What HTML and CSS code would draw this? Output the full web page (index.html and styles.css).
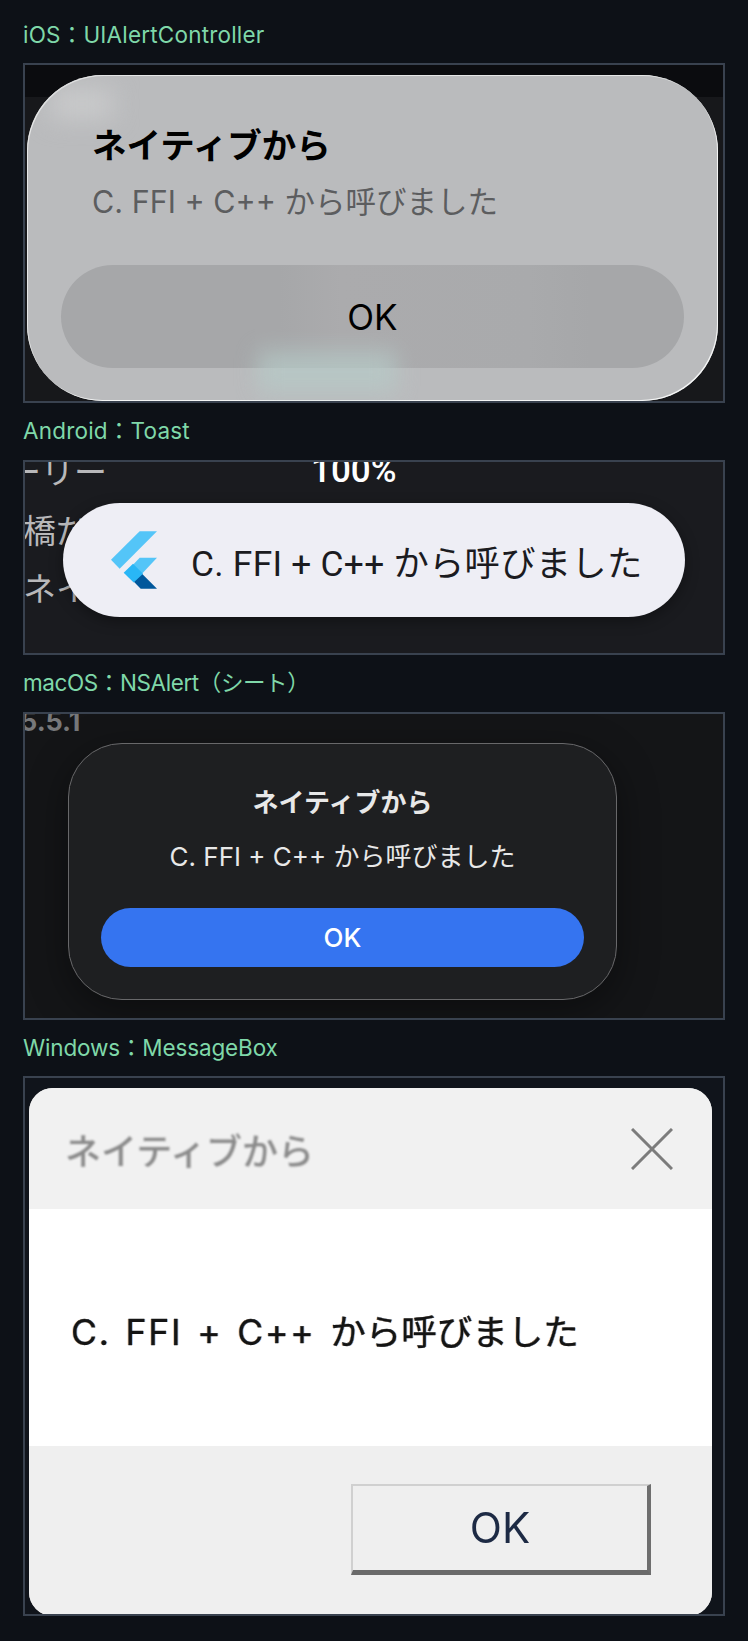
FILE: index.html
```html
<!DOCTYPE html>
<html lang="ja">
<head>
  <meta charset="UTF-8">
  <meta name="viewport" content="width=device-width, initial-scale=1.0">
  <title>Native dialogs</title>
  <link rel="stylesheet" href="styles.css">
</head>
<body>
  <section class="block">
    <p class="label label-ios">iOS：UIAlertController</p>
    <div class="frame frame-ios">
      <div class="ios-alert">
        <span class="ios-shine"></span>
        <h2 class="ios-title">ネイティブから</h2>
        <p class="ios-text">C. FFI + C++ から呼びました</p>
        <div class="ios-button">OK</div>
        <span class="ios-glow"></span>
      </div>
    </div>
  </section>

  <section class="block">
    <p class="label label-android">Android：Toast</p>
    <div class="frame frame-android">
      <span class="peek peek-row1">ーリー</span>
      <span class="peek peek-value">100%</span>
      <span class="peek peek-row2">橋だ</span>
      <span class="peek peek-row3">ネイ</span>
      <div class="toast">
        <svg class="flutter-logo" viewBox="64 62 138 173" aria-hidden="true">
          <polygon fill="#54c5f8" points="150,62 202,62 90,175 64,148"/>
          <polygon fill="#54c5f8" points="150,142 202,142 157,190 130,163"/>
          <polygon fill="#01579b" points="132,213 157,190 202,235 153,235"/>
          <polygon fill="#29b6f6" points="102,187 130,160 160,190 132,216"/>
        </svg>
        <span class="toast-text">C. FFI + C++ から呼びました</span>
      </div>
    </div>
  </section>

  <section class="block">
    <p class="label label-mac">macOS：NSAlert（シート）</p>
    <div class="frame frame-mac">
      <span class="peek peek-version">5.5.1</span>
      <div class="mac-sheet">
        <h2 class="mac-title">ネイティブから</h2>
        <p class="mac-text">C. FFI + C++ から呼びました</p>
        <div class="mac-button">OK</div>
      </div>
    </div>
  </section>

  <section class="block">
    <p class="label label-win">Windows：MessageBox</p>
    <div class="frame frame-win">
      <div class="win-box">
        <div class="win-head">
          <span class="win-title">ネイティブから</span>
          <svg class="win-close" viewBox="0 0 42 42" aria-hidden="true">
            <path d="M1 1 L41 41 M41 1 L1 41" stroke="#7c7c7c" stroke-width="3" fill="none"/>
          </svg>
        </div>
        <div class="win-body">
          <p class="win-text"><span class="win-latin">C. FFI + C++ </span>から呼びました</p>
        </div>
        <div class="win-foot">
          <div class="win-button">OK</div>
        </div>
      </div>
    </div>
  </section>
</body>
</html>
```

FILE: styles.css
```css
html, body {
  margin: 0;
  padding: 0;
}

body {
  height: 1641px;
  overflow: hidden;
  padding: 0 23px;
  background-color: #0d1117;
  font-family: Inter, "Noto Sans CJK JP", sans-serif;
}

h2, p {
  margin: 0;
  font-weight: inherit;
}

.label {
  box-sizing: border-box;
  color: #7fd8a9;
  font-size: 22.5px;
  line-height: 30px;
  white-space: nowrap;
}

.label-ios { padding-top: 20px; height: 63px; letter-spacing: 0.2px; }
.label-android { padding-top: 13px; height: 57px; letter-spacing: 0.2px; }
.label-mac { padding-top: 13px; height: 57px; letter-spacing: -0.4px; }
.label-win { padding-top: 13px; height: 56px; letter-spacing: -0.15px; }

.frame {
  position: relative;
  width: 702px;
  box-sizing: border-box;
  border: 2px solid #39424f;
  overflow: hidden;
}

/* iOS */
.frame-ios {
  height: 340px;
  padding: 10px 5px 0 2px;
  background: linear-gradient(#0b0c0f 0, #0b0c0f 32px, #17181b 32px);
}

.ios-alert {
  position: relative;
  height: 326px;
  box-sizing: border-box;
  padding: 47px 34px 0 34px;
  border-radius: 76px;
  background-color: #babbbd;
  box-shadow: inset -1px -1px 0 #f4f5f5, inset 1px 1px 0 #e6e7e7;
  overflow: hidden;
}

.ios-glow {
  position: absolute;
  left: 231px;
  top: 276px;
  width: 138px;
  height: 42px;
  background-color: #b6cbc8;
  opacity: 0.7;
  filter: blur(11px);
}

.ios-shine {
  position: absolute;
  left: 24px;
  top: 14px;
  width: 62px;
  height: 30px;
  background-color: #c9cacb;
  filter: blur(12px);
}

.ios-title {
  position: relative;
  padding-left: 31px;
  color: #000;
  font-size: 34.5px;
  font-weight: 700;
  line-height: 48px;
}

.ios-text {
  position: relative;
  margin-top: 10px;
  padding-left: 31px;
  color: #5c5d5f;
  font-size: 30.5px;
  line-height: 44px;
}

.ios-button {
  position: relative;
  height: 103px;
  margin-top: 41px;
  border-radius: 52px;
  background: linear-gradient(90deg, #a6a7a9 35%, #ababad 45%, #a9aaac 75%, #a6a7a9 85%);
  color: #000;
  font-size: 35px;
  line-height: 105px;
  text-align: center;
}

/* Android */
.frame-android {
  height: 195px;
  padding: 41px 38px 0 38px;
  background-color: #1a1b1f;
  font-family: Roboto, "Noto Sans CJK JP", sans-serif;
}

.peek {
  position: absolute;
  color: #b8b8ba;
  font-size: 33px;
  line-height: 44px;
  white-space: nowrap;
}

.peek-row1 { left: -17px; top: -11px; }
.peek-value { left: 286px; top: -13px; color: #fff; font-weight: 500; font-size: 35px; }
.peek-row2 { left: -2px; top: 48px; }
.peek-row3 { left: -2px; top: 106px; }

.toast {
  position: relative;
  display: flex;
  align-items: center;
  height: 114px;
  padding-left: 48px;
  border-radius: 57px;
  background-color: #eeeef5;
  box-shadow: 0 4px 14px rgba(0, 0, 0, 0.35);
}

.flutter-logo {
  width: 46px;
  height: 58px;
  margin-right: 34px;
}

.toast-text {
  color: #1b1b1f;
  font-size: 35.3px;
  letter-spacing: 0.27px;
  white-space: nowrap;
}

/* macOS */
.frame-mac {
  height: 308px;
  padding: 29px 0 0 43px;
  background-color: #141517;
}

.peek-version {
  left: -5px;
  top: -14px;
  color: #77787a;
  font-family: Inter, sans-serif;
  font-weight: 700;
  font-size: 27px;
}

.mac-sheet {
  position: relative;
  width: 549px;
  height: 257px;
  box-sizing: border-box;
  padding: 41px 32px 0 32px;
  border: 1px solid #68686a;
  border-radius: 54px;
  background-color: #1e1f21;
  box-shadow: 0 10px 40px rgba(0, 0, 0, 0.4);
  text-align: center;
}

.mac-title {
  color: #e8e8e8;
  font-size: 26px;
  font-weight: 700;
  line-height: 36px;
}

.mac-text {
  margin-top: 18px;
  color: #e8e8e8;
  font-size: 26px;
  line-height: 36px;
}

.mac-button {
  height: 59px;
  margin-top: 33px;
  border-radius: 30px;
  background-color: #3574f0;
  color: #fff;
  font-size: 26px;
  font-weight: 500;
  line-height: 59px;
}

/* Windows */
.frame-win {
  height: 540px;
  padding: 10px 11px 0 4px;
  background-color: #10141b;
}

.win-box {
  height: 528px;
  display: flex;
  flex-direction: column;
  border-radius: 24px;
  background-color: #f0f0f0;
  overflow: hidden;
}

.win-head {
  display: flex;
  align-items: center;
  justify-content: space-between;
  height: 121px;
  flex: none;
  padding: 0 39px 0 36px;
  background-color: #f1f1f1;
}

.win-title {
  color: #8a8a8a;
  font-size: 36px;
  font-weight: 500;
  filter: blur(0.8px);
}

.win-close {
  width: 42px;
  height: 42px;
  filter: blur(0.4px);
}

.win-body {
  display: flex;
  align-items: center;
  height: 237px;
  flex: none;
  box-sizing: border-box;
  padding: 4px 0 0 42px;
  background-color: #fff;
}

.win-text {
  color: #141414;
  font-size: 35.5px;
  -webkit-text-stroke: 0.3px #141414;
  text-shadow: -1px 0 rgba(230, 130, 20, 0.35), 1px 0 rgba(20, 110, 220, 0.35);
  filter: blur(0.5px);
  white-space: nowrap;
}

.win-latin {
  letter-spacing: 1.8px;
  word-spacing: 3px;
}

.win-foot {
  flex: 1;
  display: flex;
  justify-content: flex-end;
  padding: 38px 61px 0 0;
  background-color: #efefef;
}

.win-button {
  width: 300px;
  height: 91px;
  box-sizing: border-box;
  border: 2px solid #d0d0d0;
  border-right: 4px solid #6e6e6e;
  border-bottom: 5px solid #6a6a6a;
  color: #1d2a44;
  font-size: 42px;
  line-height: 84px;
  text-align: center;
  filter: blur(0.5px);
}
```
